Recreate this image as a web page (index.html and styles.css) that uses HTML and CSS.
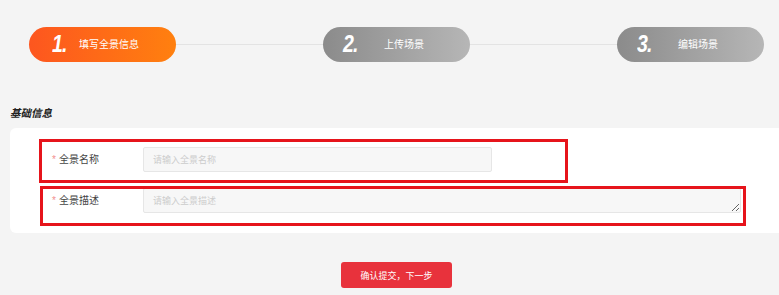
FILE: index.html
```html
<!DOCTYPE html>
<html lang="zh-CN">
<head>
    <meta charset="UTF-8">
    <meta name="viewport" content="width=device-width, initial-scale=1.0">
    <title>创建全景</title>
    <link rel="stylesheet" href="styles.css">
</head>
<body>
    <div class="steps">
        <div class="step step-active">
            <span class="step-num">1.</span>
            <span class="step-text">填写全景信息</span>
        </div>
        <div class="step-line"></div>
        <div class="step">
            <span class="step-num">2.</span>
            <span class="step-text">上传场景</span>
        </div>
        <div class="step-line"></div>
        <div class="step">
            <span class="step-num">3.</span>
            <span class="step-text">编辑场景</span>
        </div>
    </div>

    <h2 class="section-title">基础信息</h2>
    <div class="card">
        <div class="form-row">
            <label class="form-label" for="panoName"><i>*</i>全景名称</label>
            <input class="form-input" type="text" id="panoName" placeholder="请输入全景名称">
        </div>
        <div class="form-row">
            <label class="form-label" for="panoDesc"><i>*</i>全景描述</label>
            <textarea class="form-textarea" id="panoDesc" placeholder="请输入全景描述"></textarea>
        </div>
        <div class="mark mark-name"></div>
        <div class="mark mark-desc"></div>
    </div>

    <div class="actions">
        <button class="btn-submit" type="button">确认提交，下一步</button>
    </div>
</body>
</html>
```

FILE: styles.css
```css
body {
    margin: 0;
    background: #f4f4f4;
    font-family: "Liberation Sans", "Noto Sans CJK SC", sans-serif;
    overflow: hidden;
}
.steps {
    display: flex;
    align-items: center;
    padding: 27px 15px 0 29px;
}
.step {
    width: 147px;
    height: 35px;
    border-radius: 18px;
    display: flex;
    align-items: center;
    box-sizing: border-box;
    padding-left: 20px;
    color: #fff;
    background: linear-gradient(90deg, #8b8b8b, #b6b6b6);
}
.step-active {
    background: linear-gradient(90deg, #fd561f, #ff800f);
    padding-left: 23px;
}
.step-num {
    font-family: "Liberation Sans", sans-serif;
    font-weight: bold;
    font-style: italic;
    font-size: 23px;
    width: 41px;
    letter-spacing: -1px;
    transform: scaleX(0.85);
    transform-origin: left center;
}
.step-active .step-num {
    width: 27px;
}
.step-text {
    font-size: 10px;
    line-height: 1;
}
.step-line {
    flex: 1;
    height: 1px;
    background: #e3e3e3;
}
.section-title {
    margin: 44px 0 0 10px;
    font-size: 10.5px;
    font-weight: bold;
    font-style: italic;
    color: #222;
    line-height: 14px;
}
.card {
    position: relative;
    background: #fff;
    border-radius: 6px;
    margin: 8px -10px 0 10px;
    padding: 19px 0 20px 42px;
    display: flex;
    flex-direction: column;
    gap: 16px;
}
.form-row {
    display: flex;
    align-items: flex-start;
}
.form-label {
    width: 91px;
    font-size: 10px;
    color: #444;
    line-height: 25px;
}
.form-label i {
    font-style: normal;
    color: #f29090;
    margin-right: 3px;
}
.form-input,
.form-textarea {
    box-sizing: border-box;
    height: 25px;
    background: #f7f7f7;
    border: 1px solid #e6e6e6;
    border-radius: 2px;
    padding: 0 9px;
    font-family: inherit;
    font-size: 9px;
    outline: none;
}
.form-input {
    width: 349px;
}
.form-textarea {
    width: 598px;
    padding-top: 5px;
    resize: vertical;
}
.form-input::placeholder,
.form-textarea::placeholder {
    color: #cccccc;
}
.mark {
    position: absolute;
    border: 3px solid #e6141b;
    box-sizing: border-box;
}
.mark-name {
    left: 29px;
    top: 11px;
    width: 529px;
    height: 44px;
}
.mark-desc {
    left: 30px;
    top: 58px;
    width: 706px;
    height: 40px;
}
.actions {
    margin-top: 29px;
    padding-left: 341px;
}
.btn-submit {
    width: 111px;
    height: 26px;
    border: none;
    border-radius: 3px;
    background: #e8323c;
    color: #fff;
    font-family: inherit;
    font-size: 9px;
}
```
